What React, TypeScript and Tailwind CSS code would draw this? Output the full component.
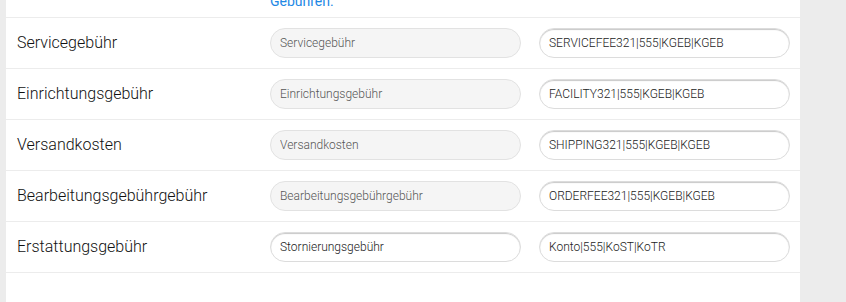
const rows = [
  { label: "Servicegebühr", name: "Servicegebühr", account: "SERVICEFEE321|555|KGEB|KGEB", editable: false },
  { label: "Einrichtungsgebühr", name: "Einrichtungsgebühr", account: "FACILITY321|555|KGEB|KGEB", editable: false },
  { label: "Versandkosten", name: "Versandkosten", account: "SHIPPING321|555|KGEB|KGEB", editable: false },
  { label: "Bearbeitungsgebührgebühr", name: "Bearbeitungsgebührgebühr", account: "ORDERFEE321|555|KGEB|KGEB", editable: false },
  { label: "Erstattungsgebühr", name: "Stornierungsgebühr", account: "Konto|555|KoST|KoTR", editable: true },
];

function FeeRow({ label, name, account, editable }: (typeof rows)[number]) {
  const base =
    "h-[30px] w-[251px] rounded-full border px-[9px] text-[12px] font-light outline-none";
  return (
    <div className="flex h-[51px] items-center border-t border-[#ececec] pl-[11px] pr-[10px]">
      <div className="w-[253px] text-[16px] font-light text-[#111]">{label}</div>
      <div className="flex gap-[18px]">
        {editable ? (
          <input
            defaultValue={name}
            className={`${base} border-[#dcdcdc] bg-white text-[#222] shadow-[inset_0_1px_1px_rgba(0,0,0,0.22)]`}
          />
        ) : (
          <input
            defaultValue={name}
            disabled
            className={`${base} border-[#e2e2e2] bg-[#f5f5f5] text-[#555]`}
          />
        )}
        <input
          defaultValue={account}
          className={`${base} border-[#dcdcdc] bg-white text-[#222] shadow-[inset_0_1px_1px_rgba(0,0,0,0.22)]`}
        />
      </div>
    </div>
  );
}

export default function App() {
  return (
    <div
      className="flex h-[302px] w-[846px] overflow-hidden bg-[#ececec] pl-[6px] pr-[46px]"
      style={{ fontFamily: "Roboto, 'Liberation Sans', sans-serif" }}
    >
      <div className="flex-1 bg-white">
        <div className="relative h-[17px] overflow-hidden">
          <span className="absolute bottom-[7px] left-[264px] text-[14px] leading-[17px] text-[#1e88e5]">
            Gebühren.
          </span>
        </div>
        {rows.map((r) => (
          <FeeRow key={r.label} {...r} />
        ))}
        <div className="border-t border-[#ececec]" />
      </div>
    </div>
  );
}
